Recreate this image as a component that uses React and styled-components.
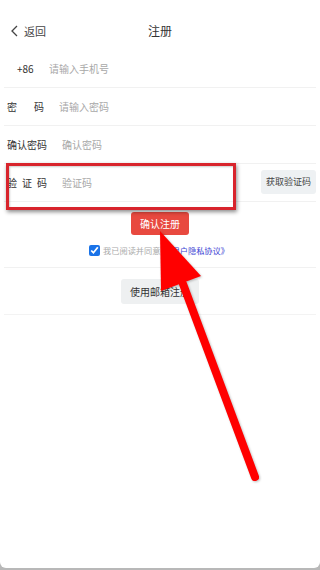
import React, { useState } from 'react';
import styled, { createGlobalStyle } from 'styled-components';

const GlobalStyle = createGlobalStyle`
  html, body {
    margin: 0;
    padding: 0;
    background: #b8b8b8;
  }
  body {
    font-family: "Noto Sans CJK SC", "Noto Sans", sans-serif;
  }
`;

const Screen = styled.div`
  position: relative;
  width: 320px;
  height: 568px;
  background: #fff;
  border-radius: 0 0 6px 6px;
  overflow: hidden;
`;

const Header = styled.div`
  height: 50px;
  display: flex;
  align-items: center;
  position: relative;
  padding: 12px 0 0 9px;
  box-sizing: border-box;
`;

const Back = styled.div`
  display: flex;
  align-items: center;
  gap: 3px;
  font-size: 11px;
  color: #444;
`;

const Title = styled.div`
  position: absolute;
  left: 0;
  right: 0;
  top: 22px;
  text-align: center;
  font-size: 12px;
  color: #333;
  pointer-events: none;
`;

const Form = styled.div`
  padding: 0 4px;
`;

const Row = styled.div`
  position: relative;
  height: 38px;
  display: flex;
  align-items: center;
  border-bottom: 1px solid #f1f1f1;
  box-sizing: border-box;
  padding-left: ${p => p.$pad || 3}px;
`;

const Label = styled.span`
  width: ${p => p.$w}px;
  font-size: 10px;
  color: #333;
  letter-spacing: ${p => p.$ls || 0}px;
  white-space: nowrap;
  flex-shrink: 0;
`;

const Input = styled.input`
  flex: 1;
  min-width: 0;
  border: none;
  outline: none;
  font-family: inherit;
  font-size: 10px;
  color: #333;
  padding: 0;
  background: transparent;
  &::placeholder {
    color: #a8a8a8;
  }
`;

const CodeButton = styled.button`
  height: 24px;
  padding: 0 5px;
  border: none;
  border-radius: 3px;
  background: #eef1f3;
  color: #444;
  font-family: inherit;
  font-size: 9px;
  margin-top: -2px;
`;

const Highlight = styled.div`
  position: absolute;
  left: 2px;
  top: -1px;
  width: 230px;
  height: 47px;
  border: 3px solid #d8242c;
  box-sizing: border-box;
  box-shadow: 1px 2px 4px rgba(0, 0, 0, 0.45), inset 1px 1px 2px rgba(0, 0, 0, 0.2);
  pointer-events: none;
`;

const Actions = styled.div`
  display: flex;
  flex-direction: column;
  align-items: center;
  border-bottom: 1px solid #f1f1f1;
  margin: 0 4px;
  padding: 10px 0 11px;
`;

const Primary = styled.button`
  width: 58px;
  height: 23px;
  border: none;
  border-radius: 3px;
  background: #e8493f;
  color: #fff;
  font-family: inherit;
  font-size: 10px;
  padding: 0;
`;

const Agree = styled.label`
  display: flex;
  align-items: center;
  gap: 3px;
  margin-top: 9px;
  font-size: 8.2px;
  color: #aaa;
  margin-left: -2px;
`;

const Check = styled.input`
  width: 11px;
  height: 11px;
  margin: 0;
  accent-color: #1a73e8;
`;

const Link = styled.span`
  color: #3b3fd4;
`;

const Secondary = styled.button`
  display: block;
  margin: 0 auto;
  width: 78px;
  height: 25px;
  border: none;
  border-radius: 3px;
  background: #eef0f1;
  color: #333;
  font-family: inherit;
  font-size: 10px;
  padding: 0;
`;

const EmailBox = styled.div`
  margin: 0 4px;
  padding: 11px 0 10px;
  border-bottom: 1px solid #f3f3f3;
`;

const Arrow = styled.svg`
  position: absolute;
  left: 0;
  top: 0;
  pointer-events: none;
  filter: drop-shadow(1px 1px 1px rgba(0, 0, 0, 0.25));
`;

export default function App() {
  const [agreed, setAgreed] = useState(true);

  return (
    <>
      <GlobalStyle />
      <Screen>
        <Header>
          <Back>
            <svg width="12" height="14" viewBox="0 0 12 14">
              <path d="M8 2 L3 7 L8 12" fill="none" stroke="#444" strokeWidth="1.3" />
            </svg>
            返回
          </Back>
          <Title>注册</Title>
        </Header>
        <Form>
          <Row $pad={13}>
            <Label $w={32}>+86</Label>
            <Input placeholder="请输入手机号" />
          </Row>
          <Row>
            <Label $w={52} $ls={17}>密码</Label>
            <Input placeholder="请输入密码" />
          </Row>
          <Row>
            <Label $w={55}>确认密码</Label>
            <Input placeholder="确认密码" />
          </Row>
          <Row>
            <Label $w={55} $ls={5}>验证码</Label>
            <Input placeholder="验证码" />
            <CodeButton>获取验证码</CodeButton>
            <Highlight />
          </Row>
        </Form>
        <Actions>
          <Primary>确认注册</Primary>
          <Agree>
            <Check type="checkbox" checked={agreed} onChange={() => setAgreed(!agreed)} />
            我已阅读并同意<Link>《用户隐私协议》</Link>
          </Agree>
        </Actions>
        <EmailBox>
          <Secondary>使用邮箱注册</Secondary>
        </EmailBox>
        <Arrow width="320" height="568" viewBox="0 0 320 568">
          <line x1="255" y1="477" x2="183" y2="284" stroke="#ff0000" strokeWidth="8" strokeLinecap="round" />
          <polygon points="160,231 161,291 201,276" fill="#ff0000" />
        </Arrow>
      </Screen>
    </>
  );
}
